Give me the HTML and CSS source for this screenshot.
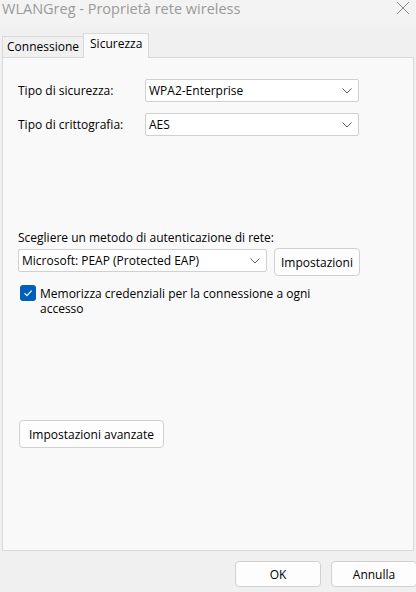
FILE: index.html
```html
<!DOCTYPE html>
<html lang="it">
<head>
<meta charset="utf-8">
<title>WLANGreg - Proprietà rete wireless</title>
<link rel="stylesheet" href="styles.css">
</head>
<body>
<div class="window">
  <div class="titlebar">
    <span class="title">WLANGreg - Proprietà rete wireless</span>
    <svg class="close" width="14" height="14" viewBox="0 0 14 14"><path d="M1 1 L13 13 M13 1 L1 13" stroke="#8a8a8a" stroke-width="1" fill="none"/></svg>
  </div>
  <div class="tabs">
    <div class="tab">Connessione</div>
    <div class="tab active">Sicurezza</div>
  </div>
  <div class="panel">
    <div class="row first">
      <span class="label">Tipo di sicurezza:</span>
      <div class="select wide"><span>WPA2-Enterprise</span><svg class="chev" width="10" height="6" viewBox="0 0 10 6"><path d="M0.5 0.5 L5 5 L9.5 0.5" stroke="#606060" fill="none"/></svg></div>
    </div>
    <div class="row second">
      <span class="label">Tipo di crittografia:</span>
      <div class="select wide"><span>AES</span><svg class="chev" width="10" height="6" viewBox="0 0 10 6"><path d="M0.5 0.5 L5 5 L9.5 0.5" stroke="#606060" fill="none"/></svg></div>
    </div>
    <div class="method-label">Scegliere un metodo di autenticazione di rete:</div>
    <div class="method-row">
      <div class="select method"><span>Microsoft: PEAP (Protected EAP)</span><svg class="chev" width="10" height="6" viewBox="0 0 10 6"><path d="M0.5 0.5 L5 5 L9.5 0.5" stroke="#606060" fill="none"/></svg></div>
      <div class="btn settings">Impostazioni</div>
    </div>
    <div class="check-row">
      <span class="checkbox"><svg width="16" height="16" viewBox="0 0 16 16"><path d="M4.5 8.3 L7 10.6 L11.6 5.6" stroke="#fff" stroke-width="1.2" fill="none"/></svg></span>
      <span class="check-text">Memorizza credenziali per la connessione a ogni accesso</span>
    </div>
    <div class="btn advanced">Impostazioni avanzate</div>
  </div>
  <div class="footer">
    <div class="btn foot">OK</div>
    <div class="btn foot">Annulla</div>
  </div>
</div>
</body>
</html>
```

FILE: styles.css
```css
* { box-sizing: border-box; }
html, body { margin: 0; padding: 0; }
body {
  width: 416px;
  height: 592px;
  overflow: hidden;
  background: #f0f0f0;
  font-family: "Open Sans", "Noto Sans", sans-serif;
  font-size: 12px;
  color: #000;
}
.window {
  width: 416px;
  height: 592px;
  display: flex;
  flex-direction: column;
  background: linear-gradient(#f3f3f3 0, #f3f3f3 22px, #f0f0f0 30px);
}
.titlebar {
  height: 30px;
  display: flex;
  align-items: flex-start;
  justify-content: space-between;
  padding: 0 6px 0 2px;
}
.title {
  font-size: 14.5px;
  line-height: 17px;
  color: #9a9a9a;
}
.close { margin-top: 1px; }
.tabs {
  height: 27px;
  display: flex;
  align-items: flex-end;
  padding-left: 2px;
  position: relative;
  z-index: 1;
}
.tab {
  height: 21px;
  padding: 0 4px;
  border: 1px solid #d9d9d9;
  border-bottom: none;
  background: #f0f0f0;
  line-height: 20px;
}
.tab.active {
  height: 25px;
  background: #f9f9f9;
  padding: 0 6px;
  line-height: 19px;
  margin-left: -1px;
  margin-bottom: -1px;
}
.panel {
  margin: 0 2px;
  height: 494px;
  background: #f9f9f9;
  border: 1px solid #d9d9d9;
  padding: 0 0 0 15px;
  display: flex;
  flex-direction: column;
  align-items: flex-start;
}
.row {
  display: flex;
  align-items: center;
}
.row.first { margin-top: 21px; }
.row.second { margin-top: 11px; }
.label { width: 127px; }
.select {
  height: 23px;
  background: #fff;
  border: 1px solid #d0d0d0;
  border-radius: 2px;
  display: flex;
  align-items: center;
  justify-content: space-between;
  padding: 0 6px 0 3px;
}
.select.wide { width: 214px; }
.chev { flex: none; }
.method-label { margin-top: 94px; line-height: 16px; }
.method-row {
  display: flex;
  align-items: flex-start;
  margin-top: 2px;
}
.select.method { width: 249px; height: 23px; margin-top: 1px; }
.btn {
  background: #fdfdfd;
  border: 1px solid #d0d0d0;
  border-radius: 4px;
  display: flex;
  align-items: center;
  justify-content: center;
}
.settings { width: 86px; height: 28px; margin-left: 7px; }
.check-row {
  display: flex;
  align-items: flex-start;
  margin-top: 9px;
  margin-left: 2px;
}
.checkbox {
  width: 16px;
  height: 16px;
  border-radius: 3px;
  background: #005fb8;
  flex: none;
  display: flex;
}
.check-text {
  margin-left: 4px;
  width: 300px;
  line-height: 15px;
  margin-top: 1px;
}
.advanced {
  margin-top: 104px;
  margin-left: 1px;
  width: 145px;
  height: 28px;
}
.footer {
  display: flex;
  justify-content: flex-end;
  gap: 10px;
  padding-top: 10px;
  margin-right: -1px;
}
.foot { width: 86px; height: 26px; }
```
